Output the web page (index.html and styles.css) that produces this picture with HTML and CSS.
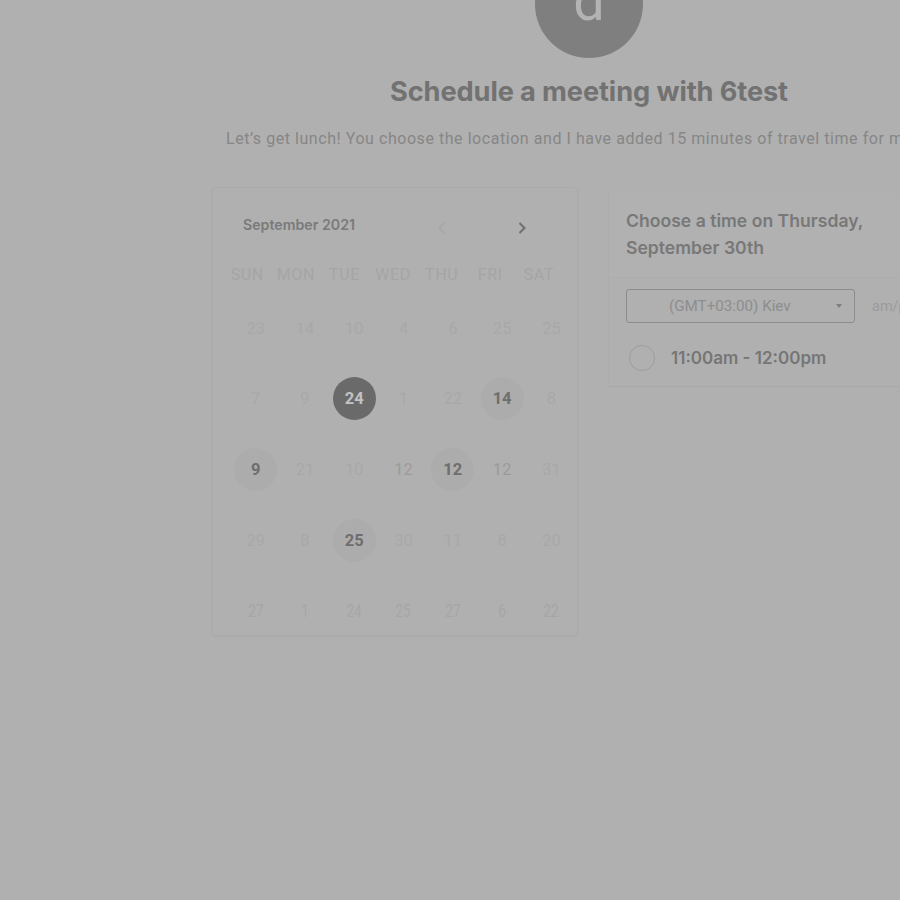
FILE: index.html
```html
<!DOCTYPE html>
<html>
<head>
<meta charset="utf-8">
<link rel="stylesheet" href="styles.css">
</head>
<body>
<div class="page">
  <div class="avatar"><span>d</span></div>
  <h1 class="title">Schedule a meeting with 6test</h1>
  <p class="subtitle">Let’s get lunch! You choose the location and I have added 15 minutes of travel time for me.</p>
  <div class="columns">
    <div class="calendar">
      <div class="cal-head">
        <span class="month">September 2021</span>
        <div class="navs">
          <svg class="nav prev" width="10" height="14" viewBox="0 0 10 14"><path d="M7 2 L2.5 7 L7 12" fill="none" stroke="currentColor" stroke-width="1.6"/></svg>
          <svg class="nav next" width="10" height="14" viewBox="0 0 10 14"><path d="M2.5 2 L7.5 7 L2.5 12" fill="none" stroke="currentColor" stroke-width="2"/></svg>
        </div>
      </div>
      <div class="weekdays">
        <div class="wd">SUN</div><div class="wd">MON</div><div class="wd">TUE</div><div class="wd">WED</div><div class="wd">THU</div><div class="wd">FRI</div><div class="wd">SAT</div>
      </div>
      <div class="days">
        <div class="d">23</div><div class="d">14</div><div class="d">10</div><div class="d">4</div><div class="d">6</div><div class="d">25</div><div class="d">25</div>

        <div class="d">7</div><div class="d">9</div><div class="d"><span class="sel">24</span></div><div class="d">1</div><div class="d">22</div><div class="d"><span class="av">14</span></div><div class="d">8</div>

        <div class="d"><span class="av">9</span></div><div class="d">21</div><div class="d">10</div><div class="d mid">12</div><div class="d"><span class="av">12</span></div><div class="d mid">12</div><div class="d">31</div>

        <div class="d">29</div><div class="d">8</div><div class="d"><span class="av">25</span></div><div class="d">30</div><div class="d">11</div><div class="d">8</div><div class="d">20</div>

        <div class="d narrow">27</div><div class="d narrow">1</div><div class="d narrow">24</div><div class="d narrow">25</div><div class="d narrow">27</div><div class="d narrow">6</div><div class="d narrow">22</div>
      </div>
    </div>
    <div class="times">
      <div class="times-head">Choose a time on Thursday,<br>September 30th</div>
      <div class="tz-row">
        <div class="select"><span>(GMT+03:00) Kiev</span><i class="caret"></i></div>
        <span class="ampm">am/pm</span>
      </div>
      <div class="slot">
        <span class="radio"></span>
        <span class="slot-text">11:00am - 12:00pm</span>
      </div>
    </div>
  </div>
</div>
</body>
</html>
```

FILE: styles.css
```css
html, body {
  margin: 0;
  padding: 0;
  background: #b0b0b0;
  overflow: hidden;
  width: 900px;
  height: 900px;
}
.page {
  width: 1178px;
  display: flex;
  flex-direction: column;
  align-items: center;
  font-family: Roboto, "Liberation Sans", sans-serif;
}
.avatar {
  width: 108px;
  height: 108px;
  border-radius: 50%;
  background: #7f7f7f;
  margin-top: -50px;
  display: flex;
  align-items: center;
  justify-content: center;
}
.avatar span {
  color: #b3b3b3;
  font-family: Roboto, sans-serif;
  font-size: 56px;
  line-height: 1;
  margin-top: -6px;
}
.title {
  margin: 17px 0 0;
  font-family: Inter, sans-serif;
  font-weight: 700;
  font-size: 27.2px;
  line-height: 34px;
  color: #727272;
  letter-spacing: -0.1px;
}
.subtitle {
  margin: 19px 0 0;
  width: 726px;
  font-size: 16px;
  line-height: 22px;
  color: #868686;
  white-space: nowrap;
  letter-spacing: 0.55px;
}
.columns {
  display: flex;
  gap: 30px;
  margin-top: 37px;
  width: 754px;
}
.calendar {
  width: 366px;
  height: 449px;
  box-sizing: border-box;
  border: 1px solid #ababab;
  border-radius: 4px;
  box-shadow: 0 1px 3px rgba(0,0,0,0.03);
  padding: 24px 13px 0;
}
.cal-head {
  display: flex;
  align-items: center;
  height: 24px;
  padding-left: 17px;
}
.month {
  font-family: Inter, sans-serif;
  font-weight: 600;
  font-size: 14.2px;
  color: #7a7a7a;
}
.navs {
  display: flex;
  gap: 70px;
  margin-left: 82px;
  margin-top: 8px;
}
.nav.prev { color: #a6a6a6; }
.nav.next { color: #6e6e6e; }
.weekdays {
  display: grid;
  grid-template-columns: repeat(7, 48.6px);
  height: 30px;
  margin-top: 23px;
  margin-left: -3px;
  align-items: center;
  justify-items: center;
}
.wd {
  font-size: 16px;
  color: #a5a5a5;
  letter-spacing: 0.6px;
}
.days {
  display: grid;
  grid-template-columns: repeat(7, 49.3px);
  grid-template-rows: repeat(5, 70.7px);
  margin-left: 5px;
  justify-items: center;
}
.d {
  font-size: 16.5px;
  color: #a8a8a8;
  align-self: start;
  margin-top: 25px;
  height: 28px;
  display: flex;
  align-items: center;
  justify-content: center;
}
.d.mid { color: #9b9b9b; }
.d.narrow {
  transform: scaleX(0.75);
  font-size: 18px;
  color: #a6a6a6;
}
.av, .sel {
  width: 43px;
  height: 43px;
  border-radius: 50%;
  display: flex;
  align-items: center;
  justify-content: center;
  font-weight: 700;
  font-size: 16.5px;
}
.av {
  background: #acacac;
  color: #6e6e6e;
}
.sel {
  background: #6a6a6a;
  color: #c2c2c2;
}
.times {
  width: 358px;
  margin-top: 6px;
}
.times-head {
  font-family: Inter, sans-serif;
  font-weight: 600;
  font-size: 17.6px;
  line-height: 27px;
  color: #787878;
  padding: 14px 17px 16px;
  border-left: 1px solid #adadad;
  border-bottom: 1px solid #adadad;
  background: #b1b1b1;
}
.tz-row {
  display: flex;
  align-items: center;
  padding: 11px 17px 0;
  border-left: 1px solid #adadad;
}
.select {
  width: 229px;
  height: 34px;
  box-sizing: border-box;
  border: 1px solid #8c8c8c;
  border-radius: 3px;
  display: flex;
  align-items: center;
  padding-left: 42px;
  padding-right: 12px;
  font-size: 15.2px;
  color: #8d8d8d;
}
.select span { flex: 1; }
.caret {
  width: 0;
  height: 0;
  border-left: 3.5px solid transparent;
  border-right: 3.5px solid transparent;
  border-top: 4px solid #7e7e7e;
}
.ampm {
  margin-left: 17px;
  font-size: 14.5px;
  color: #9b9b9b;
}
.slot {
  display: flex;
  align-items: center;
  padding: 22px 17px 15px;
  border-left: 1px solid #adadad;
  border-bottom: 1px solid #a9a9a9;
}
.radio {
  width: 24px;
  height: 24px;
  border: 1.5px solid #9d9d9d;
  border-radius: 50%;
  margin-left: 3px;
}
.slot-text {
  margin-left: 16px;
  font-family: Inter, sans-serif;
  font-weight: 600;
  font-size: 17px;
  color: #767676;
}
```
